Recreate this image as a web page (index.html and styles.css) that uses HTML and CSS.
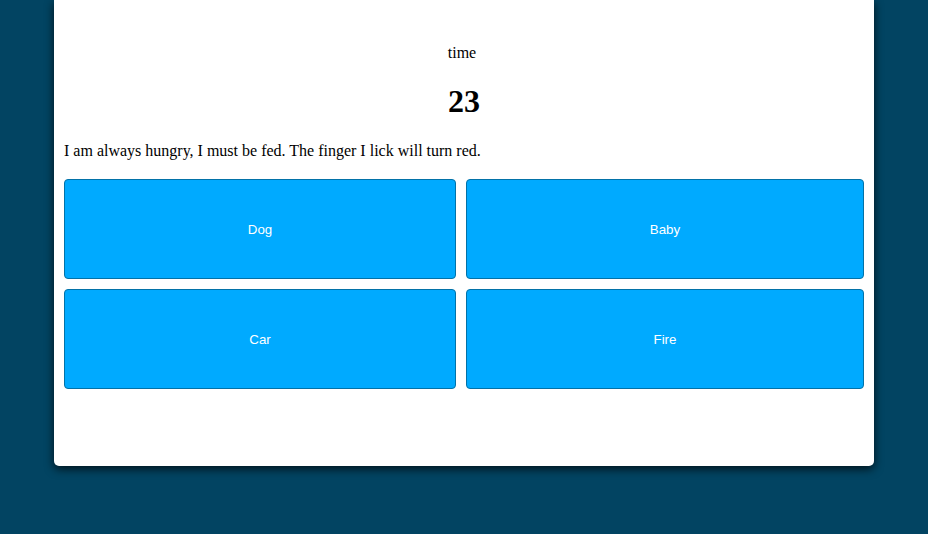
FILE: index.html
```html
<!DOCTYPE html>
<html>
<head>
<meta charset="utf-8">
<link rel="stylesheet" href="styles.css">
</head>
<body>
<div class="card">
  <p class="label">time</p>
  <h1 class="count">23</h1>
  <p class="question">I am always hungry, I must be fed. The finger I lick will turn red.</p>
  <div class="answers">
    <button class="answer">Dog</button>
    <button class="answer">Baby</button>
    <button class="answer">Car</button>
    <button class="answer">Fire</button>
  </div>
</div>
</body>
</html>
```
FILE: styles.css
```css
html, body {
  margin: 0;
  padding: 0;
  background: #024462;
  height: 100%;
}
body {
  font-family: "Liberation Serif", "Times New Roman", serif;
  font-size: 16px;
  color: #000;
}
.card {
  width: 800px;
  margin: 0 0 0 54px;
  background: #fff;
  padding: 44px 10px 77px;
  border-radius: 0 0 5px 5px;
  box-shadow: 0 3px 10px rgba(0, 0, 0, 0.75);
}
.label {
  margin: 0 0 16px;
  padding-right: 4px;
  text-align: center;
}
.count {
  margin: 21.44px 0;
  font-size: 32px;
  text-align: center;
}
.question {
  margin: 21px 0 19px;
}
.answers {
  display: grid;
  grid-template-columns: 49% 1fr;
  gap: 10px;
}
.answer {
  height: 100px;
  background: #00aaff;
  border: 1px solid #0272a8;
  border-radius: 4px;
  color: #fff;
  font-family: "Liberation Sans", Arial, sans-serif;
  font-size: 13.333px;
  padding: 2px 0 0;
}
```
